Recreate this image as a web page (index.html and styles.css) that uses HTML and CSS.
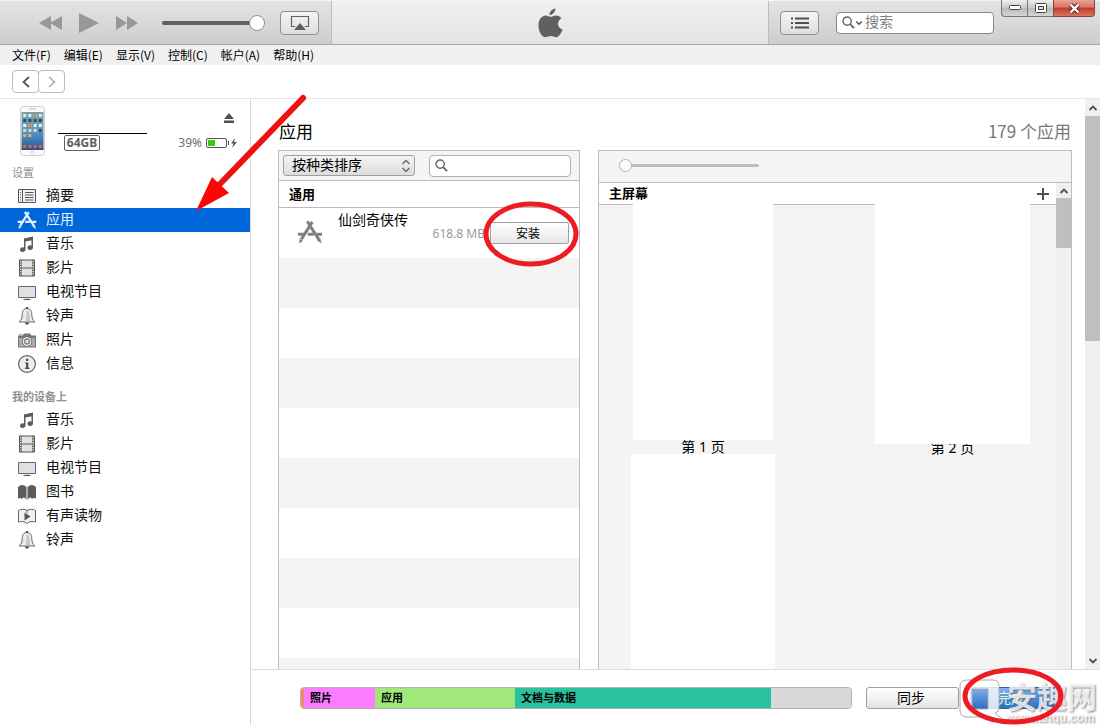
FILE: index.html
```html
<!DOCTYPE html>
<html lang="zh-CN">
<head>
<meta charset="utf-8">
<title>iTunes</title>
<link rel="stylesheet" href="styles.css">
</head>
<body>
<svg class="sprite" width="0" height="0" aria-hidden="true">
  <symbol id="i-summary" viewBox="0 0 20 20"><path d="M1.500 3.500h17v13h-17zM5.500 3.500v13" fill="#f4f4f4" stroke="#555"/><path d="M8 6.500h8.500M8 9h8.500M8 11.500h8.500M8 14h8.500M3 6.500h1M3 9h1M3 11.500h1M3 14h1" stroke="#555"/></symbol>
  <symbol id="i-apps" viewBox="0 0 28 26"><g fill="none" stroke="currentColor" stroke-width="3.200"><path d="M11 1.500 23.500 21M16.500 2 4.500 21M1 15.500h7M11.500 15.500h6.500M21.500 15.500H27"/></g><path d="M2.500 20.500l4 2-4 3zM21.500 22l3.500-2.500 1.500 6z" fill="currentColor"/></symbol>
  <symbol id="i-music" viewBox="0 0 20 20"><path d="M7 4.500 16 2.500V6L8.500 7.600V15.500A2.800 2.300 0 1 1 7 13.600zM14.500 5H16v8.500a2.800 2.300 0 1 1-1.500-1.900z" fill="#5c5c5c"/></symbol>
  <symbol id="i-film" viewBox="0 0 20 20"><path d="M2.500 2h15v16h-15z" fill="#e2e2e2" stroke="#555"/><path d="M3.500 2v16M16.500 2v16" stroke="#555" stroke-width="2.500"/><path d="M3.700 3v15M16.300 3v15" stroke="#fff" stroke-width="1.200" stroke-dasharray="1.200 1.300"/><path d="M5 10h10" stroke="#555"/></symbol>
  <symbol id="i-tv" viewBox="0 0 20 20"><path d="M1.500 4.500h17v11h-17z" fill="#e0e0e0" stroke="#666"/><path d="M6 18c1-1.600 7-1.600 8 0z" fill="#555"/></symbol>
  <symbol id="i-bell" viewBox="0 0 20 20"><path d="M10 2.500c-3.600 0-4.800 2.800-4.800 6 0 4-1 5.500-3.200 7.500h16c-2.200-2-3.200-3.500-3.200-7.500 0-3.200-1.200-6-4.800-6z" fill="#ececec" stroke="#666"/><path d="M9 1h2v2H9zM8 16.500h4c0 3-4 3-4 0z" fill="#555"/><path d="M10 4c3 1 2 6 3.500 11H9z" fill="#c5c5c5"/></symbol>
  <symbol id="i-camera" viewBox="0 0 20 20"><path d="M1 5.500h4.500l1.500-2h6l1.500 2H19v12H1zM2.500 4h2v1h-2z" fill="#777"/><path d="M2 8h16v8.500H2z" fill="#aaa"/><circle cx="10" cy="11.500" r="5" fill="#666"/><circle cx="10" cy="11.500" r="3.900" fill="#888" stroke="#fff"/><circle cx="10" cy="11.500" r="1.800" fill="#ddd"/></symbol>
  <symbol id="i-info" viewBox="0 0 20 20"><circle cx="10" cy="10" r="8.400" fill="#eee" stroke="#606060" stroke-width="1.200"/><path d="M9 4.800h2.300V7H9zM8 8.500h3.300v5.300h1.200V15H7.800v-1.200H9V9.600H8z" fill="#505050"/></symbol>
  <symbol id="i-book" viewBox="0 0 20 20"><path d="M1 5q4-4 8.500 0v13q-1.500-3-3-2.500-1 .8-1.500 1.500-1.500-1.500-4-.5zM19 5q-4-4-8.500 0v13q1.500-3 3-2.500 1 .8 1.500 1.500 1.500-1.500 4-.5z" fill="#5c5c5c"/></symbol>
  <symbol id="i-audiobook" viewBox="0 0 20 20"><path d="M1.500 4.500c2.500-1.600 6-1.600 8.500 0 2.500-1.600 6-1.600 8.500 0V16c-3-.8-6-.8-8.500 1.500C7.500 15.200 4.500 15.200 1.500 16zM10 4.500V7" fill="#f2f2f2" stroke="#666"/><path d="M7.500 6.500l6 4-6 4z" fill="#555"/></symbol>
  <symbol id="i-up" viewBox="0 0 10 6"><path d="M1.500 5 5 1.500 8.500 5" fill="none" stroke="#505050" stroke-width="1.800"/></symbol>
  <symbol id="i-down" viewBox="0 0 10 6"><path d="M1.500 1 5 4.500 8.500 1" fill="none" stroke="#505050" stroke-width="1.800"/></symbol>
  <symbol id="i-search" viewBox="0 0 14 14"><circle cx="5.500" cy="5.500" r="4.500" fill="none" stroke="#666" stroke-width="1.500"/><path d="M8.800 8.800 13 13" stroke="#666" stroke-width="2"/></symbol>
</svg>

<header class="toolbar">
  <div class="toolbar-side playback">
    <button class="plain" aria-label="上一首"><svg width="24" height="16"><path d="M12 1v14L0 8zM23 1v14L11 8z" fill="#989898"/></svg></button>
    <button class="plain" aria-label="播放"><svg width="20" height="20"><path d="M0 0l20 10L0 20z" fill="#989898"/></svg></button>
    <button class="plain" aria-label="下一首"><svg width="24" height="16"><path d="M1 1v14l11-7zM12 1v14l11-7z" fill="#989898"/></svg></button>
    <input class="volume" type="range" min="0" max="100" value="100" aria-label="音量">
    <button class="tool" aria-label="AirPlay"><svg width="20" height="16"><path d="M5 11.500H1.500v-10h17v10H15" fill="none" stroke="#606060" stroke-width="1.200"/><path d="M10 8l6 7H4z" fill="#606060"/></svg></button>
  </div>
  <div class="lcd">
    <svg width="25" height="32" viewBox="0 0 26 32"><path d="M18 1c.3 3.500-2.800 6.800-6 6.800C11.700 4.500 14.800 1.500 18 1zM12.700 9.500c1.800 0 3.200-1.400 6-1.400 2.400 0 4.500 1.200 5.700 3-5.300 3.200-4.500 9.800 1.100 12-1.600 3.900-3.900 7.600-6.600 7.600-2 0-2.900-1.200-5.600-1.200s-3.700 1.200-5.500 1.200C3.800 30.700.5 24.300.5 18.500c0-6.500 3.700-10.300 7.600-10.300 2 0 3.200 1.300 4.600 1.300z" fill="#606060"/></svg>
  </div>
  <div class="toolbar-side finder">
    <button class="tool" aria-label="列表"><svg width="18" height="12"><path d="M0 1.500h2M4 1.500h14M0 6h2M4 6h14M0 10.500h2M4 10.500h14" stroke="#505050" stroke-width="2"/></svg></button>
    <label class="search">
      <svg width="13" height="13"><use href="#i-search"/></svg>
      <svg width="8" height="6"><use href="#i-down"/></svg>
      <input type="text" placeholder="搜索" aria-label="搜索">
    </label>
  </div>
  <div class="window-buttons">
    <button aria-label="最小化"><svg width="12" height="6"><rect x=".5" y=".5" width="11" height="4" rx="1" fill="#fff" stroke="#444"/></svg></button>
    <button aria-label="最大化"><svg width="12" height="10"><rect x=".5" y=".5" width="11" height="9" rx="1" fill="#fff" stroke="#444"/><rect x="3.500" y="3.500" width="5" height="3" fill="#ddd" stroke="#444"/></svg></button>
    <button class="close" aria-label="关闭"><svg width="13" height="11"><path d="M2.500 1.500l8 8M10.500 1.500l-8 8" stroke="#5c2a28" stroke-width="4.400"/><path d="M2.500 1.500l8 8M10.500 1.500l-8 8" stroke="#fff" stroke-width="2.400"/></svg></button>
  </div>
</header>

<nav class="menubar">
  <button>文件(F)</button><button>编辑(E)</button><button>显示(V)</button><button>控制(C)</button><button>帐户(A)</button><button>帮助(H)</button>
</nav>

<div class="history">
  <button aria-label="后退"><svg width="10" height="14"><path d="M8 2 2.500 7 8 12" fill="none" stroke="#505050" stroke-width="1.700"/></svg></button><button aria-label="前进"><svg width="10" height="14"><path d="M2 2l5.500 5L2 12" fill="none" stroke="#aaa" stroke-width="1.500"/></svg></button>
</div>

<div class="workspace">
  <aside class="sidebar">
    <div class="device">
      <svg width="25" height="50" viewBox="0 0 25 50">
        <defs><linearGradient id="wall" x1="0" y1="0" x2="0" y2="1"><stop offset="0" stop-color="#6fa5ad"/><stop offset=".45" stop-color="#6697bb"/><stop offset=".7" stop-color="#3f83bd"/><stop offset="1" stop-color="#354b7c"/></linearGradient></defs>
        <rect x=".5" y=".5" width="24" height="49" rx="3" fill="#fafafa" stroke="#cfcfcf"/>
        <path d="M9 3h7" stroke="#bbb"/><circle cx="12.500" cy="46.500" r="1.500" fill="#fff" stroke="#ccc"/>
        <rect x="1.500" y="6" width="22" height="38" fill="url(#wall)"/>
        <g stroke-width="3" stroke-dasharray="3 2.200"><path d="M3.200 9.500h19" stroke="#e8e6dc"/><path d="M3.200 14.500h19" stroke="#304c62"/><path d="M3.200 19.500h19" stroke="#f0f2ef"/><path d="M3.200 24.500h19" stroke="#d4ddd2"/><path d="M3.200 29.500h8" stroke="#e4b05e"/><path d="M3.200 40.500h19" stroke="#d86555"/></g>
        <path d="M13.600 9.500h3M8.400 19.500h3" stroke="#e58350" stroke-width="3"/><path d="M18.800 24.500h3" stroke="#294e82" stroke-width="3"/>
      </svg>
      <div class="device-name"><span class="badge">64GB</span></div>
      <div class="device-state">
        <button class="plain eject" aria-label="推出"><svg width="10" height="10"><path d="M5 0l5 6H0zM0 7.500h10V10H0z" fill="#505050"/></svg></button>
        <span class="battery">39%<svg width="32" height="12"><rect x=".5" y="1.500" width="20" height="9" rx="1.500" fill="#fff" stroke="#555"/><rect x="2" y="3" width="7" height="6" fill="#36c90e"/><path d="M22.500 4v4" stroke="#555"/><path d="M29 1l-4 5.500h2.500L26 11l5-6h-3z" fill="#555"/></svg></span>
      </div>
    </div>
    <h2>设置</h2>
    <ul>
      <li><a href="#"><svg><use href="#i-summary"/></svg>摘要</a></li>
      <li><a href="#" class="selected"><svg><use href="#i-apps"/></svg>应用</a></li>
      <li><a href="#"><svg><use href="#i-music"/></svg>音乐</a></li>
      <li><a href="#"><svg><use href="#i-film"/></svg>影片</a></li>
      <li><a href="#"><svg><use href="#i-tv"/></svg>电视节目</a></li>
      <li><a href="#"><svg><use href="#i-bell"/></svg>铃声</a></li>
      <li><a href="#"><svg><use href="#i-camera"/></svg>照片</a></li>
      <li><a href="#"><svg><use href="#i-info"/></svg>信息</a></li>
    </ul>
    <h2 class="strong">我的设备上</h2>
    <ul>
      <li><a href="#"><svg><use href="#i-music"/></svg>音乐</a></li>
      <li><a href="#"><svg><use href="#i-film"/></svg>影片</a></li>
      <li><a href="#"><svg><use href="#i-tv"/></svg>电视节目</a></li>
      <li><a href="#"><svg><use href="#i-book"/></svg>图书</a></li>
      <li><a href="#"><svg><use href="#i-audiobook"/></svg>有声读物</a></li>
      <li><a href="#"><svg><use href="#i-bell"/></svg>铃声</a></li>
    </ul>
    <svg class="arrow" width="120" height="130" viewBox="190 90 120 130"><path d="M303 98 219 185" stroke="#ee1111" stroke-width="6" stroke-linecap="round"/><path d="M196 211l16-34 17 16z" fill="#fb0505"/></svg>
  </aside>

  <main class="main">
    <div class="scroller">
      <div class="content">
        <div class="heading"><h1>应用</h1><span>179 个应用</span></div>
        <div class="panels">
          <section class="panel app-panel">
            <div class="panel-tools">
              <div class="sort">
                <select aria-label="排序"><option>按种类排序</option></select>
                <svg width="10" height="14"><path d="M1.500 5 5 1.500 8.500 5M1.500 9 5 12.500 8.500 9" fill="none" stroke="#666" stroke-width="1.300"/></svg>
              </div>
              <label class="app-search"><svg width="13" height="13"><use href="#i-search"/></svg><input type="text" aria-label="搜索应用"></label>
            </div>
            <h3>通用</h3>
            <div class="app-list">
              <div class="app">
                <svg class="app-icon" width="26" height="24"><use href="#i-apps"/></svg>
                <span class="app-name">仙剑奇侠传</span>
                <span class="app-size">618.8 MB</span>
                <div class="ringed">
                  <button class="install">安装</button>
                  <svg class="ring" width="96" height="66"><ellipse cx="48" cy="33" rx="45" ry="30" fill="none" stroke="#ed1c24" stroke-width="5"/></svg>
                </div>
              </div>
            </div>
          </section>
          <section class="panel home-panel">
            <div class="zoom"><input type="range" min="0" max="100" value="0" aria-label="缩放"></div>
            <div class="home">
              <div class="home-body">
                <div class="home-head"><h3>主屏幕</h3><button class="plain" aria-label="添加"><svg width="12" height="12"><path d="M6 0v12M0 6h12" stroke="#505050" stroke-width="2"/></svg></button></div>
                <div class="pages">
                  <div class="page-column">
                    <figure><div class="page page-one"></div><figcaption>第 1 页</figcaption></figure>
                    <div class="page page-three"></div>
                  </div>
                  <div class="page-column">
                    <figure><div class="page page-two"></div><figcaption class="tucked">第 2 页</figcaption></figure>
                  </div>
                </div>
              </div>
              <div class="scrollbar"><span class="cap"><svg width="10" height="6"><use href="#i-up"/></svg></span><span class="thumb thumb-short"></span></div>
            </div>
          </section>
        </div>
      </div>
      <div class="scrollbar"><span class="cap cap-tall"><svg width="10" height="6"><use href="#i-up"/></svg></span><span class="thumb thumb-long"></span><span class="cap cap-end"><svg width="10" height="6"><use href="#i-down"/></svg></span></div>
    </div>
    <footer class="footer">
      <div class="storage">
        <span class="seg other"></span><span class="seg photos">照片</span><span class="seg apps">应用</span><span class="seg docs">文档与数据</span><span class="seg free"></span>
      </div>
      <button class="action">同步</button>
      <div class="ringed">
        <button class="action done">完成</button>
        <svg class="ring" width="102" height="58"><ellipse cx="51" cy="29" rx="48" ry="26" fill="none" stroke="#ed1c24" stroke-width="5"/></svg>
      </div>
      <div class="watermark">
        <svg width="50" height="48"><path fill-rule="evenodd" d="M10 3h26q6 0 6 6v22q0 4-4 5l9 7-9 1-8-4H10q-7 0-7-7V9q0-6 7-6zM15 12v20h16V12z" fill="#fff" fill-opacity=".8" stroke="#aaa"/></svg>
        <div><strong>安趣网</strong><small>www.anqu.com</small></div>
      </div>
    </footer>
  </main>
</div>
</body>
</html>
```
FILE: styles.css
```css
* { box-sizing: border-box; }
body {
  margin: 0;
  height: 100vh;
  display: flex;
  flex-direction: column;
  overflow: hidden;
  background: #fff;
  color: #000;
  font: 14px/20px "Noto Sans CJK SC", sans-serif;
}
button, input, select { font: inherit; color: inherit; margin: 0; padding: 0; }
svg { display: block; flex: none; }
h1, h2, h3, ul, figure { margin: 0; padding: 0; font-weight: normal; }
.sprite { position: absolute; }
.plain { border: 0; background: none; }

/* toolbar */
.toolbar {
  position: relative;
  display: flex;
  height: 45px;
  flex: none;
  border-top: 1px solid #f4f4f4;
  border-bottom: 1px solid #a8a8a8;
  background: linear-gradient(#e4e4e4, #cdcdcd);
}
.toolbar-side { width: 331px; display: flex; align-items: center; }
.playback { padding-left: 39px; }
.playback .plain + .plain { margin-left: 16px; }
.volume { width: 103px; margin: 0 15px 0 23px; }
.lcd {
  flex: 1;
  display: flex;
  align-items: center;
  justify-content: center;
  border: solid #bdbdbd;
  border-width: 0 1px;
  background: linear-gradient(#f1f1f1, #e3e3e3);
}
.finder { padding-left: 11px; gap: 17px; }
.tool {
  display: flex;
  align-items: center;
  justify-content: center;
  width: 39px;
  height: 24px;
  border: 1px solid #909090;
  border-radius: 4px;
  background: linear-gradient(#f6f6f6, #dedede);
}
.search {
  display: flex;
  align-items: center;
  width: 158px;
  height: 22px;
  padding-left: 5px;
  border: 1px solid #888;
  border-radius: 4px;
  background: #fff;
}
.search input { flex: 1; min-width: 0; margin-left: 2px; border: 0; outline: 0; height: 20px; padding-bottom: 3px; background: none; }
.search input::placeholder { color: #808080; opacity: 1; }
.window-buttons { position: absolute; top: -1px; right: 5px; display: flex; }
.window-buttons button {
  display: flex;
  align-items: center;
  justify-content: center;
  width: 26px;
  height: 17px;
  border: 1px solid #777;
  border-width: 0 0 1px 1px;
  background: linear-gradient(#f0f0f0, #c8c8c8 50%, #b8b8b8 50%, #d5d5d5);
}
.window-buttons button:first-child { border-radius: 0 0 0 4px; }
.window-buttons .close {
  width: 42px;
  border-width: 0 1px 1px;
  border-color: #7c4a45;
  border-radius: 0 0 4px 0;
  background: linear-gradient(#e8a298, #d77565 45%, #bf3b26 50%, #d87660);
}

input[type=range] { appearance: none; background: none; height: 18px; }
input[type=range]::-webkit-slider-runnable-track { height: 4px; border-radius: 2px; background: #606060; }
input[type=range]::-webkit-slider-thumb {
  appearance: none;
  width: 16px;
  height: 16px;
  margin-top: -6px;
  border: 1px solid #909090;
  border-radius: 50%;
  background: #fff;
}

.menubar {
  display: flex;
  flex: none;
  gap: 13px;
  height: 20px;
  padding-left: 12px;
  background: #f0f0f0;
  font-size: 12px;
}
.menubar button { border: 0; background: none; line-height: 20px; }
.history {
  display: flex;
  align-items: center;
  flex: none;
  height: 34px;
  padding-left: 12px;
  border-bottom: 1px solid #e6e6e6;
}
.history button {
  display: flex;
  align-items: center;
  justify-content: center;
  width: 27px;
  height: 23px;
  border: 1px solid #bcbcbc;
  border-radius: 4px;
  background: #fff;
}
.history button + button { margin-left: -1px; }

.workspace { flex: 1; display: flex; min-height: 0; }

/* sidebar */
.sidebar { position: relative; flex: none; width: 251px; border-right: 1px solid #d8d8d8; }
.device { display: flex; height: 63px; padding: 7px 12px 0 20px; }
.device-name { width: 89px; margin: 27px 0 0 13px; padding: 1px 6px; border-top: 1px solid #000; height: 24px; }
.badge {
  display: block;
  width: 36px;
  height: 16px;
  border: 1px solid #606060;
  border-radius: 2px;
  color: #606060;
  font: bold 12px/14px "Noto Sans", sans-serif;
  text-align: center;
}
.device-state { flex: 1; display: flex; flex-direction: column; align-items: flex-end; padding-top: 7px; }
.eject { margin-right: 4px; }
.battery {
  display: flex;
  align-items: center;
  gap: 4px;
  margin-top: 12px;
  color: #707070;
  font: 12px/16px "Noto Sans", sans-serif;
}
.sidebar h2 { padding-left: 12px; font-size: 11px; line-height: 20px; padding-bottom: 2px; color: #909090; }
.sidebar h2.strong { margin-top: 10px; font-weight: bold; }
.sidebar ul { list-style: none; }
.sidebar a {
  display: flex;
  align-items: flex-start;
  gap: 9px;
  height: 24px;
  padding-left: 17px;
  color: #111;
  line-height: 20px;
  text-decoration: none;
}
.sidebar a svg { width: 20px; height: 20px; margin-top: 2px; }
.sidebar a.selected { background: #0067db; color: #e4f3ff; }
.arrow { position: absolute; left: 190px; top: -9px; z-index: 2; }

/* main area */
.main { flex: 1; min-width: 0; display: flex; flex-direction: column; }
.scroller { flex: 1; min-height: 0; display: flex; }
.content { flex: 1; min-width: 0; display: flex; flex-direction: column; padding: 0 13px 0 27px; }
.heading {
  display: flex;
  justify-content: space-between;
  flex: none;
  height: 51px;
  padding: 20px 1px 0;
  font-size: 17px;
  line-height: 24px;
}
.heading h1 { font-size: 17px; }
.heading span { color: #777; }
.panels { flex: 1; min-height: 0; display: flex; gap: 18px; }
.panel {
  display: flex;
  flex-direction: column;
  overflow: hidden;
  border: 1px solid #bdbdbd;
  border-bottom: 0;
}
.panel h3 { font-size: 13px; font-weight: bold; }
.app-panel { width: 302px; flex: none; }
.panel-tools {
  display: flex;
  align-items: center;
  gap: 14px;
  height: 30px;
  flex: none;
  padding: 0 8px 0 4px;
  border-bottom: 1px solid #bdbdbd;
  background: #f4f4f4;
}
.sort { position: relative; flex: none; width: 132px; }
.sort select {
  display: block;
  appearance: none;
  width: 100%;
  height: 21px;
  padding: 0 20px 3px 8px;
  border: 1px solid #a0a0a0;
  border-radius: 3px;
  background: linear-gradient(#f4f4f4, #dcdcdc);
  line-height: 16px;
}
.sort svg { position: absolute; right: 4px; top: 4px; pointer-events: none; }
.app-search {
  flex: 1;
  min-width: 0;
  display: flex;
  align-items: center;
  height: 22px;
  padding-left: 5px;
  border: 1px solid #b0b0b0;
  border-radius: 4px;
  background: #fff;
}
.app-search input { flex: 1; min-width: 0; border: 0; outline: 0; background: none; }
.app-panel h3 { flex: none; height: 27px; padding-left: 10px; line-height: 26px; border-bottom: 1px solid #bdbdbd; }
.app-list { flex: 1; background: repeating-linear-gradient(#fff 0 50px, #f4f4f4 50px 100px); }
.app { display: flex; height: 50px; padding: 0 10px 0 18px; }
.app-icon { margin-top: 12px; color: #808080; }
.app-name { flex: 1; margin-left: 15px; line-height: 22px; white-space: nowrap; }
.app-size { margin: 16px 5px 0 -60px; color: #999; font: 12px/20px "Noto Sans", sans-serif; white-space: nowrap; }
.ringed { position: relative; flex: none; }
.ring { position: absolute; z-index: 3; pointer-events: none; }
.install {
  width: 79px;
  height: 22px;
  margin-top: 14px;
  padding-right: 3px;
  border: 1px solid #a0a0a0;
  border-radius: 2px;
  background: linear-gradient(#fff, #e6e6e6);
  font-size: 12px;
  line-height: 18px;
}
.app .ring { left: -7px; top: -7px; }

.home-panel { flex: 1; min-width: 0; background: #f4f4f4; }
.zoom { flex: none; display: flex; height: 32px; padding: 5px 20px; border-bottom: 1px solid #bdbdbd; }
.zoom input { width: 140px; }
.zoom input::-webkit-slider-runnable-track { height: 3px; background: #bdbdbd; }
.zoom input::-webkit-slider-thumb { width: 13px; height: 13px; margin-top: -5px; border-color: #b0b0b0; }
.home { flex: 1; min-height: 0; display: flex; }
.home-body { flex: 1; min-width: 0; display: flex; flex-direction: column; }
.home-head {
  display: flex;
  align-items: center;
  justify-content: space-between;
  flex: none;
  height: 22px;
  padding: 0 7px 0 10px;
  border-bottom: 1px solid #bdbdbd;
  background: #fff;
}
.home-head h3 { line-height: 18px; padding-bottom: 2px; }
.pages { flex: 1; min-height: 0; display: flex; gap: 100px; margin-top: -1px; padding-left: 32px; }
.page-column { display: flex; flex-direction: column; align-items: center; }
.page { position: relative; background: #fff; }
.page-one { width: 140px; height: 236px; }
.page-two { width: 155px; height: 240px; }
.page-three { width: 144px; flex: 1; }
figcaption { height: 14px; font: 14px/14px "Noto Sans", "Noto Sans CJK SC", sans-serif; text-align: center; }
figcaption.tucked { margin-top: -3px; }

.scrollbar { flex: none; display: flex; flex-direction: column; width: 15px; background: #f0f0f0; }
.cap { display: flex; align-items: center; justify-content: center; height: 15px; }
.cap-tall { height: 17px; }
.cap-end { margin-top: auto; height: 17px; }
.thumb { background: #bfbfbf; }
.thumb-short { height: 50px; }
.thumb-long { height: 225px; }

/* footer */
.footer {
  position: relative;
  display: flex;
  align-items: center;
  flex: none;
  height: 56px;
  padding: 0 40px 0 49px;
  border-top: 1px solid #ddd;
}
.storage {
  flex: 1;
  display: flex;
  height: 22px;
  margin-right: 14px;
  overflow: hidden;
  border: 1px solid rgba(0, 0, 0, .3);
  border-radius: 4px;
  font-size: 11px;
  font-weight: bold;
  line-height: 19px;
}
.seg { flex-basis: 0; min-width: 0; text-indent: 6px; white-space: nowrap; }
.other { flex-grow: 3; background: #fb8666; }
.photos { flex-grow: 71; background: #fa7cff; }
.apps { flex-grow: 140; background: #a0e87a; }
.docs { flex-grow: 256; background: #29c19f; }
.free { flex-grow: 80; background: #d8d8d8; }
.action {
  display: block;
  width: 93px;
  height: 22px;
  margin-right: 11px;
  padding: 0 3px 2px 0;
  border: 1px solid #a0a0a0;
  border-radius: 3px;
  background: linear-gradient(#fff, #e4e4e4);
  line-height: 18px;
}
.done {
  width: 90px;
  margin-right: 0;
  padding-right: 8px;
  border-color: #345e9c;
  background: linear-gradient(#7fb3ec, #2b6fc6);
  color: #e8f5d8;
}
.footer .ring { left: -8px; top: -20px; }
.watermark {
  position: absolute;
  z-index: 2;
  right: 3px;
  bottom: 0;
  display: flex;
  align-items: flex-end;
  color: rgba(255, 255, 255, .8);
  text-shadow: 1px 1px 2px rgba(90, 90, 90, .7);
  pointer-events: none;
}
.watermark div { display: flex; flex-direction: column; }
.watermark strong { font-size: 30px; line-height: 32px; }
.watermark small { font: bold 12px/14px "Liberation Sans", sans-serif; }
```
